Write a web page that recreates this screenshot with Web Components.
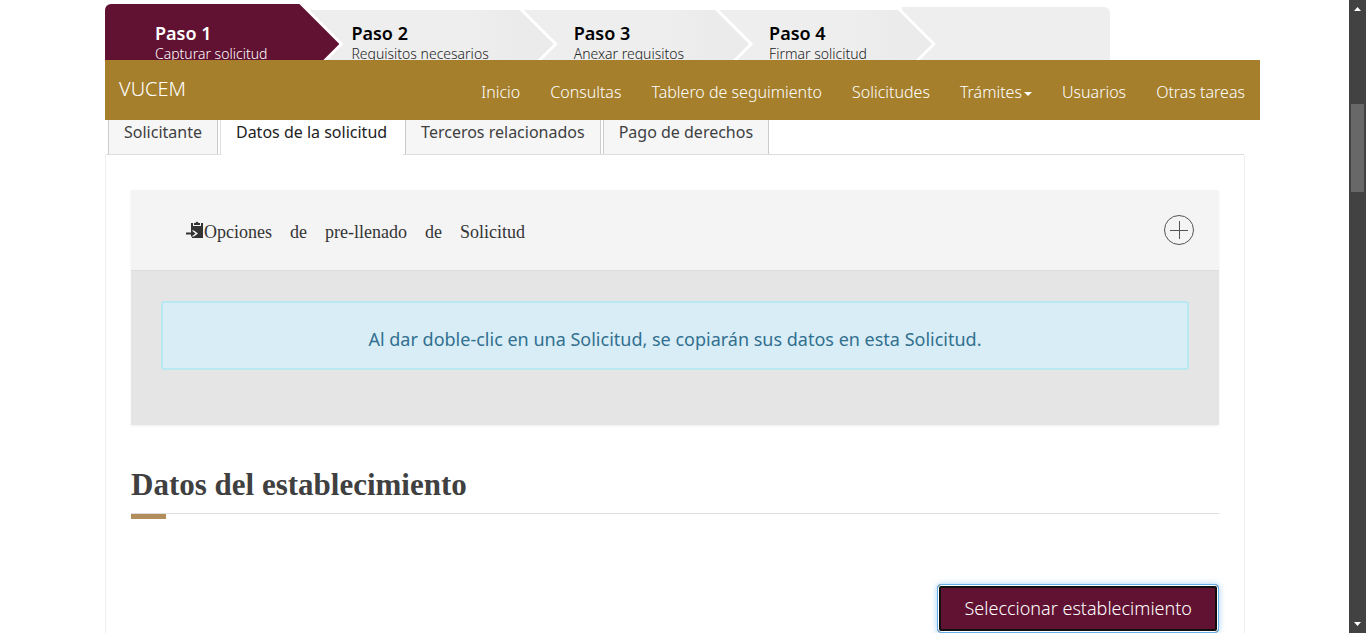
<!DOCTYPE html>
<html lang="es">
<head>
<meta charset="utf-8">
<meta name="viewport" content="width=device-width, initial-scale=1">
<title>VUCEM</title>
<style>
body { margin: 0; background: #fff; font-family: "Noto Sans", "Open Sans", sans-serif; font-size: 16px; color: #404041; }
</style>
</head>
<body>
<app-shell>
  <step-wizard>
    <wizard-step current>Paso 1<span slot="detail">Capturar solicitud</span></wizard-step>
    <wizard-step>Paso 2<span slot="detail">Requisitos necesarios</span></wizard-step>
    <wizard-step>Paso 3<span slot="detail">Anexar requisitos</span></wizard-step>
    <wizard-step>Paso 4<span slot="detail">Firmar solicitud</span></wizard-step>
  </step-wizard>
  <main-nav></main-nav>
  <tab-bar></tab-bar>
  <tab-panel>
    <fold-panel>
      <span slot="title">Opciones&emsp;de&emsp;pre-llenado&emsp;de&emsp;Solicitud</span>
      <info-alert>Al dar doble-clic en una Solicitud, se copiarán sus datos en esta Solicitud.</info-alert>
    </fold-panel>
    <section-title>Datos del establecimiento</section-title>
    <action-button>Seleccionar establecimiento</action-button>
  </tab-panel>
</app-shell>
<script>
const define = (name, html, setup) => customElements.define(name, class extends HTMLElement {
  constructor() {
    super();
    this.attachShadow({ mode: 'open' }).innerHTML = html;
    if (setup) setup(this, this.shadowRoot);
  }
});

define('app-shell', `
<style>
:host { display: grid; grid-template-columns: minmax(0, 1fr) 17px; height: 100vh; overflow: hidden; }
main { overflow: hidden; }
.container { box-sizing: border-box; max-width: 1171px; margin: 0 auto; padding: 0 15px 0 16px; }
</style>
<main><div class="container"><slot></slot></div></main>
<page-scrollbar></page-scrollbar>`);

define('page-scrollbar', `
<style>
:host { display: grid; grid-template-rows: 17px 87fr 88fr 424fr 17px; background: #424242; }
svg { display: block; width: 17px; height: 17px; fill: #fff; }
.thumb { grid-row: 3; margin: 0 2px; background: #686868; }
.down { grid-row: 5; }
</style>
<svg viewBox="0 0 17 17" aria-hidden="true"><path d="M5 11 8.500 7 12 11z"/></svg>
<div class="thumb"></div>
<svg class="down" viewBox="0 0 17 17" aria-hidden="true"><path d="M5 6 8.500 10 12 6z"/></svg>`);

define('step-wizard', `
<style>
:host { display: flex; align-items: flex-start; height: 60px; overflow: hidden; }
.rest { width: 208px; height: 74px; margin: 7px 0 0 -34px; background: #eee; border-radius: 0 6px 6px 0; }
</style>
<slot></slot><div class="rest"></div>`, host => {
  [...host.children].forEach((step, i, all) => { step.style.zIndex = all.length - i; });
});

define('wizard-step', `
<style>
:host {
  --half: 34px;
  position: relative; flex: none; margin: 10px 0 0 -34px; padding-right: 4px; background: #fff;
  clip-path: polygon(0 0, calc(100% - var(--half)) 0, 100% var(--half), calc(100% - var(--half)) 100%, 0 100%);
}
.face {
  box-sizing: border-box; height: calc(var(--half) * 2); padding: 11px 65px 0 50px;
  background: linear-gradient(to right, #eee calc(100% - 80px), #ebebeb calc(100% - 40px));
  clip-path: polygon(0 0, calc(100% - var(--half)) 0, 100% var(--half), calc(100% - var(--half)) 100%, 0 100%);
}
b { display: block; font-size: 18px; line-height: 24px; font-weight: 600; color: #000; }
.detail { display: block; font-size: 14px; line-height: 18px; font-weight: 300; color: #222; white-space: nowrap; }
:host([current]) { --half: 40px; margin: 4px -8px 0 0; }
:host([current]) .face { padding: 17px 72px 0 50px; background: #611232; border-radius: 6px 0 0 6px; }
:host([current]) b, :host([current]) .detail { color: #fff; }
</style>
<div class="face"><b><slot></slot></b><span class="detail"><slot name="detail"></slot></span></div>`);

define('main-nav', `
<style>
:host { display: block; margin-right: -15px; background: #a57f2c; }
nav { display: flex; justify-content: space-between; height: 60px; padding: 0 15px 0 14px; }
a { color: #fff; font-weight: 300; text-decoration: none; white-space: nowrap; }
.brand { font-size: 20px; line-height: 58px; }
ul { display: flex; gap: 30px; margin: 0; padding: 0; list-style: none; line-height: 64px; }
.caret { display: inline-block; margin-left: 2px; border: 4px solid transparent; border-top-color: currentColor; border-bottom: 0; vertical-align: middle; }
</style>
<nav>
  <a class="brand" href="#vucem">VUCEM</a>
  <ul>
    <li><a href="#inicio">Inicio</a></li>
    <li><a href="#consultas">Consultas</a></li>
    <li><a href="#tablero">Tablero de seguimiento</a></li>
    <li><a href="#solicitudes">Solicitudes</a></li>
    <li><a href="#tramites">Trámites<span class="caret"></span></a></li>
    <li><a href="#usuarios">Usuarios</a></li>
    <li><a href="#tareas">Otras tareas</a></li>
  </ul>
</nav>`);

define('tab-bar', `
<style>
:host { display: block; margin: 0 1px; border-bottom: 1px solid #ddd; }
ul { display: flex; gap: 2px; height: 34px; margin: 0; padding: 0 2px; list-style: none; }
a { display: block; height: 34px; padding: 0 15px; border: 1px solid #ccc; border-width: 0 1px; background: #f6f6f6; color: #404041; line-height: 24px; text-decoration: none; white-space: nowrap; }
a.active { height: 35px; border-color: #ddd; border-right-color: #fff; background: #fff; color: #222; }
</style>
<ul>
  <li><a href="#solicitante">Solicitante</a></li>
  <li><a href="#datos" class="active" aria-current="page">Datos de la solicitud</a></li>
  <li><a href="#terceros">Terceros relacionados</a></li>
  <li><a href="#pago">Pago de derechos</a></li>
</ul>`);

define('tab-panel', `
<style>
:host { display: block; padding: 35px 25px 24px; border: 1px solid #eee; border-width: 0 1px; }
</style>
<slot></slot>`);

define('fold-panel', `
<style>
:host { display: block; box-shadow: 0 1px 2px #0001; }
header { display: flex; align-items: center; height: 80px; padding: 0 25px 0 55px; background: #f4f4f4; border-bottom: 1px solid #ddd; }
h4 { display: flex; align-items: center; flex: 1; margin: 0; font: 18px/24px "Liberation Serif", "Times New Roman", serif; color: #333; }
.copy { width: 18px; height: 18px; fill: #333; }
.title { padding-top: 4px; }
button { width: 30px; height: 30px; padding: 0; border: 0; background: none; }
button svg { display: block; fill: none; stroke: #545454; }
.body { min-height: 93px; padding: 30px 30px 31px; background: #e5e5e5; }
</style>
<header>
  <h4>
    <svg class="copy" viewBox="0 0 18 18" aria-hidden="true"><path d="M5 2H7V5H15V2H17V17H6V15.500H8L12 12.500L8 9.500H5zM8 4V2H9.500Q11 -1 12.500 2H14V4zM0 11.500H5V9L9.500 12.500L5 16V13.500H0z"/></svg>
    <span class="title"><slot name="title"></slot></span>
  </h4>
  <button type="button" aria-label="Mostrar opciones"><svg width="30" height="30" viewBox="0 0 30 30"><circle cx="15" cy="15" r="14.500"/><path d="M6 15.500h18M15.500 6v18"/></svg></button>
</header>
<div class="body"><slot></slot></div>`);

define('info-alert', `
<style>
:host { display: block; padding: 24px 15px 17px; border: 2px solid #b8e8f0; border-radius: 3px; background: #d9edf7; color: #31708f; font-size: 18px; line-height: 24px; text-align: center; }
</style>
<slot></slot>`);

define('section-title', `
<style>
:host { display: block; margin-top: 40px; }
h3 { margin: 0; padding-bottom: 8px; border-bottom: 1px solid #ddd; font: bold 31px/40px "Liberation Serif", "Times New Roman", serif; color: #404041; }
.mark { width: 35px; height: 5px; background: #b38e5d; }
</style>
<h3><slot></slot></h3>
<div class="mark"></div>`);

define('action-button', `
<style>
:host { display: flex; justify-content: flex-end; margin-top: 65px; }
button {
  height: 49px; padding: 0 26px 2px; border: 1px solid #66afe9; border-radius: 4px; background: #611232; color: #fff;
  font: 300 18px/24px "Noto Sans", "Open Sans", sans-serif; white-space: nowrap;
  box-shadow: inset 0 0 0 1px #fff, inset 0 0 0 3px #101010, 0 0 6px #66afe999;
}
</style>
<button type="button"><slot></slot></button>`);
</script>
</body>
</html>
